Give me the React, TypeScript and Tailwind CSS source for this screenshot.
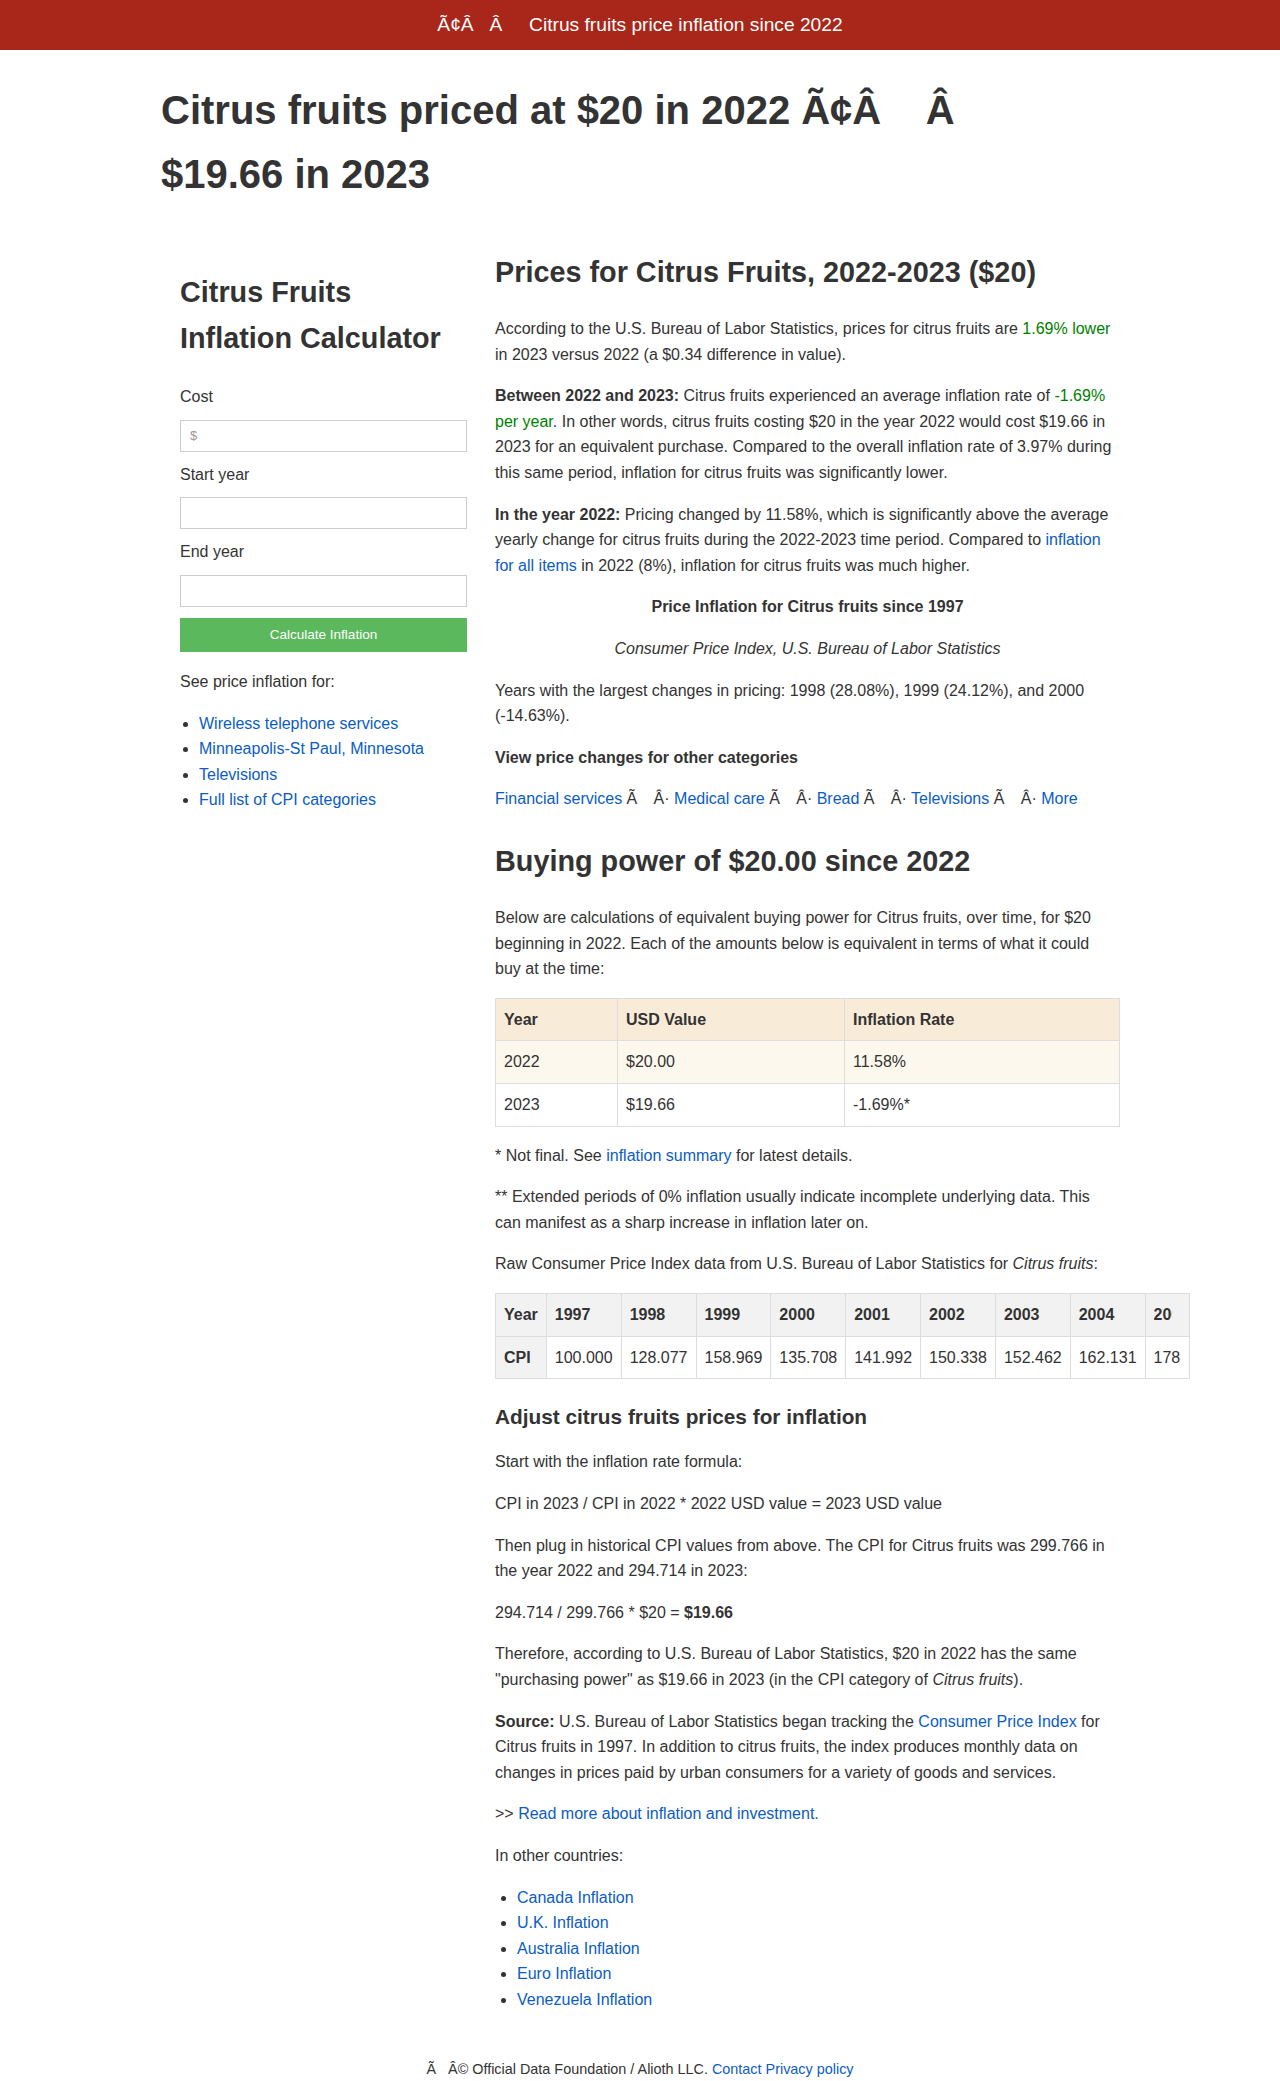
import React from "react";

const A = ({ children }: { children: React.ReactNode }) => (
  <a href="#" className="text-[#0b5cc4] no-underline">
    {children}
  </a>
);

const NB = "\u00a0";
const Sep = () => (
  <>
    {" Ã" + NB + NB + NB}
    <span className="ml-[3px]">{"Â· "}</span>
  </>
);

export default function App() {
  const years = ["1997", "1998", "1999", "2000", "2001", "2002", "2003", "2004"];
  const cpis = ["100.000", "128.077", "158.969", "135.708", "141.992", "150.338", "152.462", "162.131"];
  return (
    <div className="min-h-[2081px] bg-white text-[#333] text-[16px] leading-[1.6] font-['Liberation_Sans',Arial,Helvetica,sans-serif]">
      <header className="h-[50px] bg-[#a8271a] flex items-center justify-center text-white text-[19.2px] leading-none">
        <span>
          {"Ã¢Â" + NB + NB + NB + "Â" + NB + NB + NB + NB + " Citrus fruits price inflation since 2022"}
        </span>
      </header>

      <div className="w-[960px] mx-auto">
        <h1 className="mt-[28px] mb-[17px] pl-px text-[40px] font-bold leading-[64px]">
          {"Citrus fruits priced at $20 in 2022 Ã¢Â" + NB + NB + NB + NB + "Â"}
          <br />
          $19.66 in 2023
        </h1>

        <div className="flex items-start">
          <aside className="w-[328px] shrink-0 px-5 pt-5">
            <h2 className="mt-[26px] mb-[23px] text-[28.8px] font-bold leading-[1.6]">
              Citrus Fruits
              <br />
              Inflation Calculator
            </h2>
            <label className="block mb-[10px]">Cost</label>
            <input
              className="block w-[287px] h-[32px] border border-[#ccc] px-[9px] text-[13px] placeholder:text-[#999] outline-none mb-[10px]"
              placeholder="$"
            />
            <label className="block mb-[10px]">Start year</label>
            <input className="block w-[287px] h-[32px] border border-[#ccc] px-[9px] text-[13px] outline-none mb-[10px]" />
            <label className="block mb-[10px]">End year</label>
            <input className="block w-[287px] h-[32px] border border-[#ccc] px-[9px] text-[13px] outline-none" />
            <button className="block mt-[11px] w-[287px] h-[34px] bg-[#5cb85c] text-white text-[13.5px]">
              Calculate Inflation
            </button>
            <p className="mt-[17px]">See price inflation for:</p>
            <ul className="mt-[16px] list-disc pl-[19px]">
              <li><A>Wireless telephone services</A></li>
              <li><A>Minneapolis-St Paul, Minnesota</A></li>
              <li><A>Televisions</A></li>
              <li><A>Full list of CPI categories</A></li>
            </ul>
          </aside>

          <main className="w-[620px] ml-[7px] shrink-0">
            <h2 className="mt-[26px] mb-[21px] text-[28.8px] font-bold leading-[1.6]">
              Prices for Citrus Fruits, 2022-2023 ($20)
            </h2>
            <p className="mb-4">
              According to the U.S. Bureau of Labor Statistics, prices for citrus fruits are{" "}
              <span className="text-[#008000]">1.69% lower</span> in 2023 versus 2022 (a $0.34 difference in value).
            </p>
            <p className="mb-4">
              <b>Between 2022 and 2023:</b> Citrus fruits experienced an average inflation rate of{" "}
              <span className="text-[#008000]">-1.69% per year</span>. In other words, citrus fruits costing $20 in the
              year 2022 would cost $19.66 in 2023 for an equivalent purchase. Compared to the overall inflation rate of
              3.97% during this same period, inflation for citrus fruits was significantly lower.
            </p>
            <p className="mb-4">
              <b>In the year 2022:</b> Pricing changed by 11.58%, which is significantly above the average yearly change
              for citrus fruits during the 2022-2023 time period. Compared to <A>inflation for all items</A> in 2022
              (8%), inflation for citrus fruits was much higher.
            </p>
            <p className="mb-4 w-[625px] text-center font-bold">Price Inflation for Citrus fruits since 1997</p>
            <p className="mb-4 w-[625px] text-center italic">Consumer Price Index, U.S. Bureau of Labor Statistics</p>
            <p className="mb-4">
              Years with the largest changes in pricing: 1998 (28.08%), 1999 (24.12%), and 2000 (-14.63%).
            </p>
            <p className="mb-4 font-bold">View price changes for other categories</p>
            <p className="mb-4">
              <A>Financial services</A>
              <Sep />
              <A>Medical care</A>
              <Sep />
              <A>Bread</A>
              <Sep />
              <A>Televisions</A>
              <Sep />
              <A>More</A>
            </p>

            <h2 className="mt-[26px] mb-[21px] text-[28.8px] font-bold leading-[1.6]">
              Buying power of $20.00 since 2022
            </h2>
            <p className="mb-4">
              Below are calculations of equivalent buying power for Citrus fruits, over time, for $20 beginning in 2022.
              Each of the amounts below is equivalent in terms of what it could buy at the time:
            </p>
            <table className="w-[625px] table-fixed border-collapse mb-4">
              <thead>
                <tr className="bg-[#f8ecd9]">
                  <th className="w-[122px] text-left font-bold px-2 py-2 border border-[#ddd]">Year</th>
                  <th className="w-[227px] text-left font-bold px-2 py-2 border border-[#ddd]">USD Value</th>
                  <th className="text-left font-bold px-2 py-2 border border-[#ddd]">Inflation Rate</th>
                </tr>
              </thead>
              <tbody>
                <tr className="bg-[#fdf8ee]">
                  <td className="px-2 py-2 border border-[#ddd]">2022</td>
                  <td className="px-2 py-2 border border-[#ddd]">$20.00</td>
                  <td className="px-2 py-2 border border-[#ddd]">11.58%</td>
                </tr>
                <tr className="bg-white">
                  <td className="px-2 py-2 border border-[#ddd]">2023</td>
                  <td className="px-2 py-2 border border-[#ddd]">$19.66</td>
                  <td className="px-2 py-2 border border-[#ddd]">-1.69%*</td>
                </tr>
              </tbody>
            </table>
            <p className="mb-4">
              * Not final. See <A>inflation summary</A> for latest details.
            </p>
            <p className="mb-4">
              ** Extended periods of 0% inflation usually indicate incomplete underlying data. This can manifest as a
              sharp increase in inflation later on.
            </p>
            <p className="mb-4">
              Raw Consumer Price Index data from U.S. Bureau of Labor Statistics for <i>Citrus fruits</i>:
            </p>
            <div className="w-[695px] overflow-hidden">
              <table className="border-collapse whitespace-nowrap">
                <tbody>
                  <tr className="bg-[#f2f2f2]">
                    <th className="text-left font-bold px-2 py-2 border border-[#ddd]">Year</th>
                    {years.map((y) => (
                      <th key={y} className="text-left font-bold px-2 py-2 border border-[#ddd]">
                        {y}
                      </th>
                    ))}
                    <th className="text-left font-bold pl-2 pr-[17px] py-2 border border-[#ddd]">
                      <div className="w-[18px] overflow-hidden">2005</div>
                    </th>
                  </tr>
                  <tr>
                    <th className="text-left font-bold px-2 py-2 border border-[#ddd] bg-[#f2f2f2]">CPI</th>
                    {cpis.map((c, i) => (
                      <td key={i} className="px-2 py-2 border border-[#ddd]">
                        {c}
                      </td>
                    ))}
                    <td className="px-2 py-2 border border-[#ddd]">
                      <div className="w-[27px] overflow-hidden">178.506</div>
                    </td>
                  </tr>
                </tbody>
              </table>
            </div>

            <h3 className="mt-[21px] mb-4 text-[20.8px] font-bold leading-[1.6]">
              Adjust citrus fruits prices for inflation
            </h3>
            <p className="mb-4">Start with the inflation rate formula:</p>
            <p className="mb-4">CPI in 2023 / CPI in 2022 * 2022 USD value = 2023 USD value</p>
            <p className="mb-4">
              Then plug in historical CPI values from above. The CPI for Citrus fruits was 299.766 in the year 2022 and
              294.714 in 2023:
            </p>
            <p className="mb-4">
              294.714 / 299.766 * $20 = <b>$19.66</b>
            </p>
            <p className="mb-4">
              Therefore, according to U.S. Bureau of Labor Statistics, $20 in 2022 has the same "purchasing power" as
              $19.66 in 2023 (in the CPI category of <i>Citrus fruits</i>).
            </p>
            <p className="mb-4">
              <b>Source:</b> U.S. Bureau of Labor Statistics began tracking the <A>Consumer Price Index</A> for Citrus
              fruits in 1997. In addition to citrus fruits, the index produces monthly data on changes in prices paid by
              urban consumers for a variety of goods and services.
            </p>
            <p className="mb-4">
              {">> "}
              <A>Read more about inflation and investment.</A>
            </p>
            <p className="mb-4">In other countries:</p>
            <ul className="list-disc pl-[22px] mb-4">
              <li><A>Canada Inflation</A></li>
              <li><A>U.K. Inflation</A></li>
              <li><A>Australia Inflation</A></li>
              <li><A>Euro Inflation</A></li>
              <li><A>Venezuela Inflation</A></li>
            </ul>
          </main>
        </div>
      </div>

      <footer className="mt-[28px] text-center text-[14.4px] leading-[25.6px]">
        {"Ã" + NB + NB + NB + "Â© Official Data Foundation / Alioth LLC. "}
        <A>Contact</A> <A>Privacy policy</A>
      </footer>
    </div>
  );
}
